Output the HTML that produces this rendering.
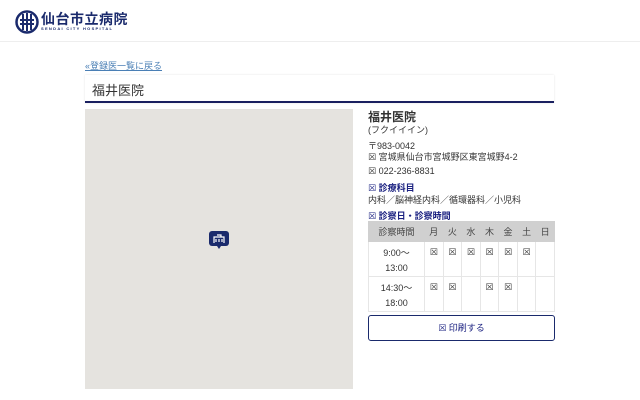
<!DOCTYPE html>
<html><head><meta charset="utf-8"><style>
*{margin:0;padding:0;box-sizing:border-box}
body{width:640px;height:400px;overflow:hidden;background:#fff;font-family:"Liberation Sans","Noto Sans CJK JP",sans-serif;color:#333;position:relative}
.hdr{position:absolute;left:0;top:0;width:640px;height:42px;border-bottom:1px solid #eee}
.abs{position:absolute}
.x{font-family:"DejaVu Sans",sans-serif;font-size:9px}
table{border-collapse:collapse;position:absolute;left:368px;top:221px;width:187px;font-size:9px;text-align:center}
td,th{border:1px solid #e6e6e6}
th{background:#d0d0d0;font-weight:normal;height:20px;color:#444;border-color:#d0d0d0}
td{height:34px;vertical-align:top;padding-top:4px;line-height:15px}
</style></head><body>
<div class="hdr">
<svg class="abs" style="left:15px;top:10px" width="24" height="24" viewBox="0 0 24 24"><circle cx="12" cy="12" r="10.5" fill="none" stroke="#1a2a6c" stroke-width="2.5"/><path d="M8 4v16M12 3v18M16 4v16M5 10h14M5 14h14" stroke="#1a2a6c" stroke-width="2"/></svg>
<div class="abs" style="left:41px;top:9px;font-size:14px;font-weight:bold;color:#1a2a6c;letter-spacing:0.5px">仙台市立病院</div>
<div class="abs" style="left:41px;top:26px;font-size:4px;font-weight:bold;color:#1a2a6c;letter-spacing:1.3px">SENDAI CITY HOSPITAL</div>
</div>
<div class="abs" style="left:85px;top:59px;font-size:9px;color:#4a7fb5;text-decoration:underline">«登録医一覧に戻る</div>
<div class="abs" style="left:85px;top:75px;width:469px;height:28px;border-bottom:2px solid #1a2060;box-shadow:0 0 2px #e4e4e4"></div>
<div class="abs" style="left:92px;top:80px;font-size:13px;color:#333">福井医院</div>
<div class="abs" style="left:85px;top:109px;width:268px;height:280px;background:#e5e3df"></div>
<svg class="abs" style="left:209px;top:230px" width="20" height="20" viewBox="0 0 20 20"><rect x="0" y="1" width="20" height="15" rx="3" fill="#1a2a6c"/><path d="M8 16l2 3 2-3z" fill="#1a2a6c"/><path d="M5 13V7h10v6M8 5h4v2M7 9v3M10 9v3M13 9v3" stroke="#fff" stroke-width="1.2" fill="none"/></svg>
<div class="abs" style="left:368px;top:108px;font-size:12px;font-weight:bold;color:#333">福井医院</div>
<div class="abs" style="left:368px;top:123px;font-size:9px">(フクイイイン)</div>
<div class="abs" style="left:368px;top:139px;font-size:9px">〒983-0042</div>
<div class="abs" style="left:368px;top:150px;font-size:9px"><span class="x">☒</span> 宮城県仙台市宮城野区東宮城野4-2</div>
<div class="abs" style="left:368px;top:166px;font-size:9px"><span class="x">☒</span> 022-236-8831</div>
<div class="abs" style="left:368px;top:181px;font-size:9px;font-weight:bold;color:#1a2080"><span class="x">☒</span> 診療科目</div>
<div class="abs" style="left:368px;top:193px;font-size:9px">内科／脳神経内科／循環器科／小児科</div>
<div class="abs" style="left:368px;top:209px;font-size:9px;font-weight:bold;color:#1a2080"><span class="x">☒</span> 診察日・診察時間</div>
<table>
<tr><th style="width:56px">診察時間</th><th>月</th><th>火</th><th>水</th><th>木</th><th>金</th><th>土</th><th>日</th></tr>
<tr><td>9:00〜<br>13:00</td><td class="x">☒</td><td class="x">☒</td><td class="x">☒</td><td class="x">☒</td><td class="x">☒</td><td class="x">☒</td><td></td></tr>
<tr><td>14:30〜<br>18:00</td><td class="x">☒</td><td class="x">☒</td><td></td><td class="x">☒</td><td class="x">☒</td><td></td><td></td></tr>
</table>
<div class="abs" style="left:368px;top:315px;width:187px;height:26px;border:1px solid #1a2a6c;border-radius:3px;text-align:center;line-height:24px;font-size:9px;color:#1a2080"><span class="x">☒</span> 印刷する</div>
</body></html>
